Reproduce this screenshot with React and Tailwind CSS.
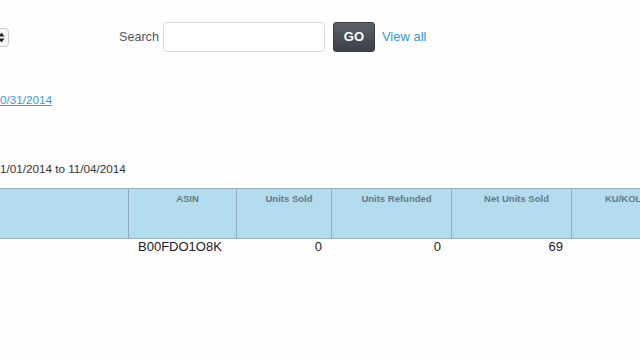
import React from 'react'

const COLS = 'grid grid-cols-[129px_108px_95px_120px_120px_200px]'

const HEADERS = ['', 'ASIN', 'Units Sold', 'Units Refunded', 'Net Units Sold']

function SelectStub() {
  // only the right edge of a native select shows at the left of the page
  return (
    <div className="w-[9px] h-[19px] overflow-hidden shrink-0">
      <div className="-ml-[21px] w-[30px] h-[19px] rounded-[4px] border border-[#c9c9c9] bg-[#f8f8f8] flex items-center justify-end pr-[3px]">
        <svg width="7" height="11" viewBox="0 0 7 11">
          <path d="M3.5 0.5 L6.5 4.5 L0.5 4.5 Z" fill="#222" />
          <path d="M3.5 10.5 L6.5 6.5 L0.5 6.5 Z" fill="#222" />
        </svg>
      </div>
    </div>
  )
}

export default function App() {
  return (
    <div className="w-[640px] h-[360px] overflow-hidden bg-[#fefefe] font-['Liberation_Sans',Arial,sans-serif] text-[#333]">
      {/* search bar */}
      <div className="flex items-center pt-[22px]">
        <div className="pt-[1px]"><SelectStub /></div>
        <span className="ml-[110px] text-[12.6px] text-[#555] leading-[30px]">Search</span>
        <input className="ml-[4px] w-[162px] h-[30px] rounded-[3px] border border-[#dcdcdc] bg-white outline-none" />
        <button className="ml-[8px] w-[42px] h-[30px] rounded-[3px] border border-[#3a3e43] bg-gradient-to-b from-[#5d6269] to-[#3c4046] text-white text-[13px] font-bold">
          GO
        </button>
        <a className="ml-[7px] text-[13px] text-[#2f9bd6]">View all</a>
      </div>

      {/* report period link */}
      <div className="mt-[41px] text-[11.7px] leading-[14px]">
        <a className="text-[#3a9ad9] underline">0/31/2014</a>
      </div>

      <div className="mt-[55px] text-[11.7px] leading-[14px] text-[#333]">1/01/2014 to 11/04/2014</div>

      {/* table */}
      <div className="mt-[12px]">
        <div className={`${COLS} h-[51px] bg-[#b3dcef] border-t border-b border-[#9aafbc]`}>
          {HEADERS.map((h, i) => (
            <div key={i} className="border-r border-[#93aab8] pt-[4px] pl-[12px] pr-[2px] text-center text-[9.5px] font-bold text-[#687985] leading-[11px]">
              {h}
            </div>
          ))}
          <div className="pt-[4px] pl-[33px] text-left text-[9.5px] font-bold text-[#687985] leading-[11px] whitespace-nowrap">
            KU/KOLL Units
          </div>
        </div>
        <div className={`${COLS} text-[13px] leading-[16px] text-[#222]`}>
          <div></div>
          <div className="pl-[9px]">B00FDO1O8K</div>
          <div className="text-right pr-[10px]">0</div>
          <div className="text-right pr-[11px]">0</div>
          <div className="text-right pr-[9px]">69</div>
          <div></div>
        </div>
      </div>
    </div>
  )
}
